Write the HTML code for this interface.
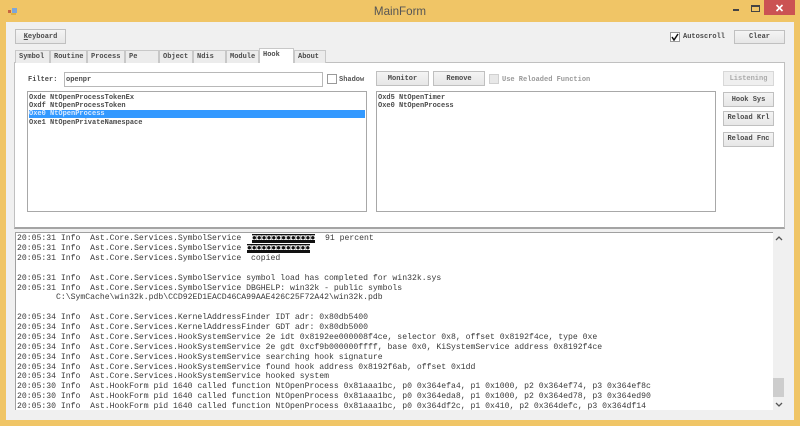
<!DOCTYPE html>
<html>
<head>
<meta charset="utf-8">
<style>
html,body{margin:0;padding:0;width:800px;height:426px;overflow:hidden;background:#f0c566}
*{box-sizing:border-box}
.a{position:absolute}
#w{position:absolute;left:0;top:0;width:800px;height:426px;overflow:hidden;background:#f0c566;font-family:"Liberation Mono",monospace;font-size:7px;color:#333;filter:blur(.3px)}
.t{position:absolute;white-space:pre;line-height:10px;height:10px}
.b{position:absolute;background:linear-gradient(#f4f4f4,#e6e6e6);border:1px solid #c0c0c0;text-align:center;font-family:"Liberation Mono",monospace;font-size:7px;font-weight:bold;color:#4a4a4a;white-space:pre}
.tab{position:absolute;top:50px;height:13px;background:#ececec;border:1px solid #c8c8c8;border-bottom:none;line-height:12px;padding-left:3px;font-weight:bold;color:#4a4a4a;white-space:pre}
.box{position:absolute;background:#fff;border:1px solid #a8a8a8}
.l{position:absolute;left:17px;white-space:pre;font-size:8.15px;line-height:10px;height:10px;color:#3a3a3a;font-family:"Liberation Mono",monospace}
.k{position:absolute;height:9px;background:#111;color:#fff;font-size:8.15px;line-height:9px;white-space:pre;font-family:"Liberation Mono",monospace;letter-spacing:0}
.cb{position:absolute;width:10px;height:10px;background:#fff;border:1px solid #9a9a9a}
.li{position:absolute;left:2px;white-space:pre;line-height:9px;height:9px;font-weight:bold;color:#4a4a4a}
</style>
</head>
<body>
<div id="w">
  <!-- title bar -->
  <svg class="a" style="left:8px;top:7px" width="10" height="9" viewBox="0 0 10 9"><rect x="0" y="3" width="3" height="3" fill="#c8663f"/><rect x="4" y="1" width="5" height="5" fill="#7ea6d8"/><rect x="3" y="6" width="5" height="2" fill="#e0b040"/></svg>
  <div class="a" style="left:300px;width:200px;top:4px;text-align:center;font:11.6px/16px 'Liberation Sans',sans-serif;color:#555">MainForm</div>
  <div class="a" style="left:733px;top:9px;width:6px;height:2px;background:#444"></div>
  <div class="a" style="left:751px;top:5px;width:9px;height:7px;border:1px solid #444;border-top-width:2px"></div>
  <div class="a" style="left:764px;top:0;width:31px;height:15px;background:#cb5353"></div>
  <svg class="a" style="left:775px;top:4px" width="9" height="8" viewBox="0 0 9 8"><path d="M1.5 1 L7.5 7 M7.5 1 L1.5 7" stroke="#fff" stroke-width="1.6"/></svg>

  <!-- client -->
  <div class="a" style="left:6px;top:22px;width:788px;height:398px;background:#f0f0f0"></div>

  <div class="b" style="left:15px;top:29px;width:51px;height:15px;line-height:15px"><u>K</u>eyboard</div>
  <div class="cb" style="left:670px;top:32px"></div>
  <svg class="a" style="left:671px;top:33px" width="8" height="8" viewBox="0 0 8 8"><path d="M1 4 L3 7 L7 1" stroke="#111" stroke-width="1.5" fill="none"/></svg>
  <div class="t" style="left:683px;top:32px;font-weight:bold;color:#4a4a4a">Autoscroll</div>
  <div class="b" style="left:734px;top:30px;width:51px;height:14px;line-height:13px">Clear</div>

  <!-- tab panel -->
  <div class="a" style="left:14px;top:62px;width:771px;height:167px;background:#fff;border:1px solid #c0c0c0;border-bottom:2px solid #a4a4a4"></div>
  <div class="tab" style="left:15px;width:35px">Symbol</div>
  <div class="tab" style="left:50px;width:37px">Routine</div>
  <div class="tab" style="left:87px;width:38px">Process</div>
  <div class="tab" style="left:125px;width:34px">Pe</div>
  <div class="tab" style="left:159px;width:34px">Object</div>
  <div class="tab" style="left:193px;width:33px">Ndis</div>
  <div class="tab" style="left:226px;width:33px">Module</div>
  <div class="tab" style="left:259px;top:48px;width:35px;height:15px;background:#fff;line-height:13px">Hook</div>
  <div class="tab" style="left:294px;width:32px">About</div>

  <!-- filter row -->
  <div class="t" style="left:28px;top:75px;font-weight:bold;color:#4a4a4a">Filter:</div>
  <div class="box" style="left:64px;top:72px;width:259px;height:15px;border-color:#b8b8b8"></div>
  <div class="t" style="left:66px;top:75px;font-weight:bold;color:#4a4a4a">openpr</div>
  <div class="cb" style="left:327px;top:74px"></div>
  <div class="t" style="left:339px;top:75px;font-weight:bold;color:#555">Shadow</div>

  <div class="b" style="left:376px;top:71px;width:53px;height:15px;line-height:15px">Monitor</div>
  <div class="b" style="left:433px;top:71px;width:52px;height:15px;line-height:15px">Remove</div>
  <div class="cb" style="left:489px;top:74px;background:#e8e8e8;border-color:#d0d0d0"></div>
  <div class="t" style="left:502px;top:75px;color:#999;font-weight:bold">Use Reloaded Function</div>

  <div class="b" style="left:723px;top:71px;width:51px;height:15px;line-height:15px;background:#efefef;border-color:#d8d8d8;color:#aaa">Listening</div>
  <div class="b" style="left:723px;top:92px;width:51px;height:15px;line-height:14px">Hook Sys</div>
  <div class="b" style="left:723px;top:111px;width:51px;height:15px;line-height:13px">Reload Krl</div>
  <div class="b" style="left:723px;top:132px;width:51px;height:15px;line-height:13px">Reload Fnc</div>

  <!-- lists -->
  <div class="box" style="left:27px;top:91px;width:340px;height:121px">
    <div class="li" style="top:2px;left:1px">Oxde NtOpenProcessTokenEx</div>
    <div class="li" style="top:10px;left:1px">Oxdf NtOpenProcessToken</div>
    <div class="a" style="left:1px;top:18px;width:336px;height:8px;background:#3399ff"></div>
    <div class="li" style="top:18px;left:1px;color:#dbeaff">Oxe0 NtOpenProcess</div>
    <div class="li" style="top:27px;left:1px">Oxe1 NtOpenPrivateNamespace</div>
  </div>
  <div class="box" style="left:376px;top:91px;width:340px;height:121px">
    <div class="li" style="top:2px;left:1px">Oxd5 NtOpenTimer</div>
    <div class="li" style="top:10px;left:1px">Oxe0 NtOpenProcess</div>
  </div>

  <!-- log -->
  <div class="a" style="left:15px;top:232px;width:770px;height:178px;background:#fff;border-left:1px solid #a0a0a0;border-top:1px solid #a0a0a0"></div>
  <div class="a" style="left:773px;top:232px;width:12px;height:178px;background:#f0f0f0"></div>
  <div class="a" style="left:773px;top:378px;width:11px;height:19px;background:#cdcdcd"></div>
  <svg class="a" style="left:775px;top:236px" width="8" height="5" viewBox="0 0 8 5"><path d="M1 4 L4 1 L7 4" stroke="#555" stroke-width="1.3" fill="none"/></svg>
  <svg class="a" style="left:775px;top:402px" width="8" height="5" viewBox="0 0 8 5"><path d="M1 1 L4 4 L7 1" stroke="#555" stroke-width="1.3" fill="none"/></svg>

  <div class="l" style="top:234px">20:05:31 Info  Ast.Core.Services.SymbolService</div>
  <div class="k" style="left:252px;top:234px">◘◘◘◘◘◘◘◘◘◘◘◘◘</div>
  <div class="l" style="top:234px;left:325px">91 percent</div>
  <div class="l" style="top:244px">20:05:31 Info  Ast.Core.Services.SymbolService</div>
  <div class="k" style="left:247px;top:244px">◘◘◘◘◘◘◘◘◘◘◘◘◘</div>
  <div class="l" style="top:254px">20:05:31 Info  Ast.Core.Services.SymbolService  copied</div>
  <div class="l" style="top:274px">20:05:31 Info  Ast.Core.Services.SymbolService symbol load has completed for win32k.sys</div>
  <div class="l" style="top:284px">20:05:31 Info  Ast.Core.Services.SymbolService DBGHELP: win32k - public symbols</div>
  <div class="l" style="top:293px">        C:\SymCache\win32k.pdb\CCD92ED1EACD46CA99AAE426C25F72A42\win32k.pdb</div>
  <div class="l" style="top:313px">20:05:34 Info  Ast.Core.Services.KernelAddressFinder IDT adr: 0x80db5400</div>
  <div class="l" style="top:323px">20:05:34 Info  Ast.Core.Services.KernelAddressFinder GDT adr: 0x80db5000</div>
  <div class="l" style="top:333px">20:05:34 Info  Ast.Core.Services.HookSystemService 2e idt 0x8192ee000008f4ce, selector 0x8, offset 0x8192f4ce, type 0xe</div>
  <div class="l" style="top:343px">20:05:34 Info  Ast.Core.Services.HookSystemService 2e gdt 0xcf9b000000ffff, base 0x0, KiSystemService address 0x8192f4ce</div>
  <div class="l" style="top:353px">20:05:34 Info  Ast.Core.Services.HookSystemService searching hook signature</div>
  <div class="l" style="top:363px">20:05:34 Info  Ast.Core.Services.HookSystemService found hook address 0x8192f6ab, offset 0x1dd</div>
  <div class="l" style="top:372px">20:05:34 Info  Ast.Core.Services.HookSystemService hooked system</div>
  <div class="l" style="top:382px">20:05:30 Info  Ast.HookForm pid 1640 called function NtOpenProcess 0x81aaa1bc, p0 0x364efa4, p1 0x1000, p2 0x364ef74, p3 0x364ef8c</div>
  <div class="l" style="top:392px">20:05:30 Info  Ast.HookForm pid 1640 called function NtOpenProcess 0x81aaa1bc, p0 0x364eda8, p1 0x1000, p2 0x364ed78, p3 0x364ed90</div>
  <div class="l" style="top:402px">20:05:30 Info  Ast.HookForm pid 1640 called function NtOpenProcess 0x81aaa1bc, p0 0x364df2c, p1 0x410, p2 0x364defc, p3 0x364df14</div>
</div>
</body>
</html>
